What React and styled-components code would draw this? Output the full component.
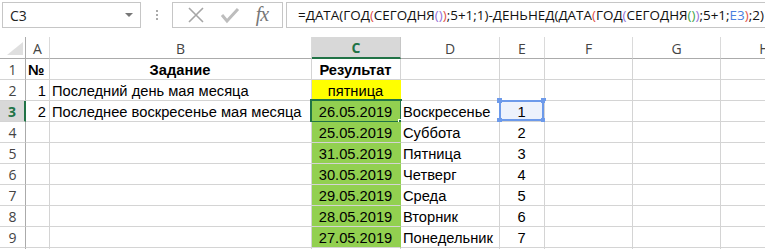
import React from "react"
import styled, { createGlobalStyle } from "styled-components"

const GlobalStyle = createGlobalStyle`
  body {
    margin: 0;
    background: #fff;
    overflow: hidden;
  }
`

const cols = ["A", "B", "C", "D", "E", "F", "G", "H"]

const rows = [
  { n: 1, a: "№", b: "Задание", c: "Результат", d: "", e: "", bold: true },
  { n: 2, a: "1", b: "Последний день мая месяца", c: "пятница", d: "", e: "", cbg: "#ffff00" },
  { n: 3, a: "2", b: "Последнее воскресенье мая месяца", c: "26.05.2019", d: "Воскресенье", e: "1", cbg: "#92d050", active: true },
  { n: 4, c: "25.05.2019", d: "Суббота", e: "2", cbg: "#92d050" },
  { n: 5, c: "31.05.2019", d: "Пятница", e: "3", cbg: "#92d050" },
  { n: 6, c: "30.05.2019", d: "Четверг", e: "4", cbg: "#92d050" },
  { n: 7, c: "29.05.2019", d: "Среда", e: "5", cbg: "#92d050" },
  { n: 8, c: "28.05.2019", d: "Вторник", e: "6", cbg: "#92d050" },
  { n: 9, c: "27.05.2019", d: "Понедельник", e: "7", cbg: "#92d050" },
  { n: "" }
]

const Page = styled.div`
  width: 765px;
  height: 249px;
  overflow: hidden;
  font-family: "Open Sans", "Noto Sans", sans-serif;
`

const TopBar = styled.div`
  height: 37px;
  display: flex;
  align-items: flex-start;
  padding: 2px 0 0 2px;
  box-sizing: border-box;
`

const NameBox = styled.div`
  width: 139px;
  flex: none;
  height: 26px;
  box-sizing: border-box;
  border: 1px solid #c6c6c6;
  display: flex;
  align-items: center;
  justify-content: space-between;
  padding: 0 7px 0 7px;
  font-size: 14px;
  color: #222;
`

const Arrow = styled.span`
  width: 0;
  height: 0;
  border-left: 4px solid transparent;
  border-right: 4px solid transparent;
  border-top: 4px solid #777;
`

const Dots = styled.div`
  width: 31px;
  flex: none;
  height: 26px;
  display: flex;
  flex-direction: column;
  align-items: center;
  justify-content: center;
  gap: 2px;

  span {
    width: 2px;
    height: 2px;
    background: #aaa;
  }
`

const FnBox = styled.div`
  width: 111px;
  flex: none;
  height: 26px;
  box-sizing: border-box;
  border: 1px solid #c6c6c6;
  display: flex;
  align-items: center;
  justify-content: space-around;
  padding: 0 6px;
`

const Fx = styled.span`
  font-family: "Liberation Serif", "DejaVu Serif", serif;
  font-style: italic;
  font-size: 20px;
  color: #777;
  letter-spacing: -1px;
  margin-top: -2px;
`

const FormulaBox = styled.div`
  flex: 1;
  min-width: 0;
  margin-left: 3px;
  height: 26px;
  box-sizing: border-box;
  border: 1px solid #c6c6c6;
  border-right: none;
  display: flex;
  align-items: center;
  padding-left: 11px;
  font-size: 13.45px;
  white-space: nowrap;
  overflow: hidden;
  color: #111;
`

const Paren = styled.span`
  color: ${(p) => p.$c};
`

const Grid = styled.div`
  display: grid;
  grid-template-columns: 26px 24px 262px 89px 99px 45px 88px 88px 88px;
  grid-auto-rows: 21px;
  grid-template-rows: 22px;
`

const Corner = styled.div`
  border-right: 1px solid #ababab;
  border-bottom: 1px solid #ababab;
  box-sizing: border-box;
  display: flex;
  align-items: flex-end;
  justify-content: flex-end;
  padding: 0 2px 3px 0;
`

const ColHead = styled.div`
  box-sizing: border-box;
  border-right: 1px solid ${(p) => (p.$active ? "#c6c6c6" : "#dadada")};
  border-bottom: ${(p) => (p.$active ? "2px solid #217346" : "1px solid #ababab")};
  background: ${(p) => (p.$active ? "#d8d8d8" : "#fff")};
  color: ${(p) => (p.$active ? "#217346" : "#444")};
  font-weight: ${(p) => (p.$active ? 700 : 400)};
  font-size: 14px;
  display: flex;
  align-items: center;
  justify-content: center;
  padding-top: 1px;
`

const RowHead = styled.div`
  box-sizing: border-box;
  border-right: ${(p) => (p.$active ? "2px solid #217346" : "1px solid #ababab")};
  border-bottom: 1px solid #d4d4d4;
  background: ${(p) => (p.$active ? "#d8d8d8" : "#fff")};
  color: ${(p) => (p.$active ? "#217346" : "#444")};
  font-weight: ${(p) => (p.$active ? 700 : 400)};
  font-size: 14px;
  display: flex;
  align-items: center;
  justify-content: center;
`

const Cell = styled.div`
  position: relative;
  box-sizing: border-box;
  border-right: 1px solid ${(p) => (p.$bg ? p.$bg : "#d4d4d4")};
  border-bottom: 1px solid #d4d4d4;
  background: ${(p) => p.$bg || "#fff"};
  font-family: "Liberation Sans", Arial, sans-serif;
  font-size: 14.7px;
  font-weight: ${(p) => (p.$bold ? 700 : 400)};
  color: #000;
  display: flex;
  align-items: flex-end;
  justify-content: ${(p) => p.$align || "flex-start"};
  padding: 0 3px 1px 2px;
  white-space: nowrap;
`

const ActiveFrame = styled.div`
  position: absolute;
  top: -2px;
  left: -2px;
  right: -2px;
  bottom: -2px;
  border: 2px solid #217346;
  pointer-events: none;
`

const FillHandle = styled.div`
  position: absolute;
  right: -5px;
  bottom: -5px;
  width: 5px;
  height: 5px;
  background: #217346;
  border: 1px solid #fff;
`

const RefFrame = styled.div`
  position: absolute;
  top: -1px;
  left: -1px;
  right: 0;
  bottom: 0;
  border: 2px solid #6d9aea;
  background: rgba(110, 150, 230, 0.12);
`

const Knob = styled.div`
  position: absolute;
  width: 5px;
  height: 5px;
  background: #6d9aea;
  ${(p) => (p.$top ? "top: -4px;" : "bottom: -4px;")}
  ${(p) => (p.$left ? "left: -4px;" : "right: -4px;")}
`

const CellText = styled.span`
  position: relative;
`

const formula = [
  ["=ДАТА(ГОД", "#111"],
  ["(", "#e0524c"],
  ["СЕГОДНЯ", "#111"],
  ["()", "#9672d8"],
  [")", "#e0524c"],
  [";5+1;1)-ДЕНЬНЕД(ДАТА", "#111"],
  ["(", "#e0524c"],
  ["ГОД", "#111"],
  ["(", "#9672d8"],
  ["СЕГОДНЯ", "#111"],
  ["()", "#3fa34d"],
  [")", "#9672d8"],
  [";5+1;", "#111"],
  ["E3", "#4a7fe0"],
  [")", "#e0524c"],
  [";2)", "#111"]
]

const App = () => {
  return (
    <Page>
      <GlobalStyle />
      <TopBar>
        <NameBox>
          <span>C3</span>
          <Arrow />
        </NameBox>
        <Dots>
          <span />
          <span />
          <span />
        </Dots>
        <FnBox>
          <svg width="18" height="18" viewBox="0 0 18 18">
            <path d="M2 2 L16 16 M16 2 L2 16" stroke="#a6a6a6" strokeWidth="1.6" fill="none" />
          </svg>
          <svg width="20" height="18" viewBox="0 0 20 18">
            <path d="M2 9 L7 15 L18 3" stroke="#bdbdbd" strokeWidth="3" fill="none" />
          </svg>
          <Fx>fx</Fx>
        </FnBox>
        <FormulaBox>
          {formula.map(([t, c], i) => (
            <Paren key={i} $c={c}>{t}</Paren>
          ))}
        </FormulaBox>
      </TopBar>

      <Grid>
        <Corner>
          <svg width="16" height="13" viewBox="0 0 16 13">
            <polygon points="16,0 16,13 0,13" fill="#dfdfdf" />
          </svg>
        </Corner>
        {cols.map((c) => (
          <ColHead key={c} $active={c === "C"}>{c}</ColHead>
        ))}

        {rows.map((r, i) => (
          <React.Fragment key={i}>
            <RowHead $active={r.active}>{r.n}</RowHead>
            <Cell $align={r.bold ? "flex-start" : "flex-end"} $bold={r.bold}>{r.a}</Cell>
            <Cell $align={r.bold ? "center" : "flex-start"} $bold={r.bold}>{r.b}</Cell>
            <Cell $align="center" $bold={r.bold} $bg={r.cbg}>
              {r.c}
              {r.active && (
                <ActiveFrame>
                  <FillHandle />
                </ActiveFrame>
              )}
            </Cell>
            <Cell>{r.d}</Cell>
            <Cell $align="center">
              {r.active && (
                <RefFrame>
                  <Knob $top $left />
                  <Knob $top />
                  <Knob $left />
                  <Knob />
                </RefFrame>
              )}
              <CellText>{r.e}</CellText>
            </Cell>
            <Cell />
            <Cell />
            <Cell />
          </React.Fragment>
        ))}
      </Grid>
    </Page>
  )
}

export default App
